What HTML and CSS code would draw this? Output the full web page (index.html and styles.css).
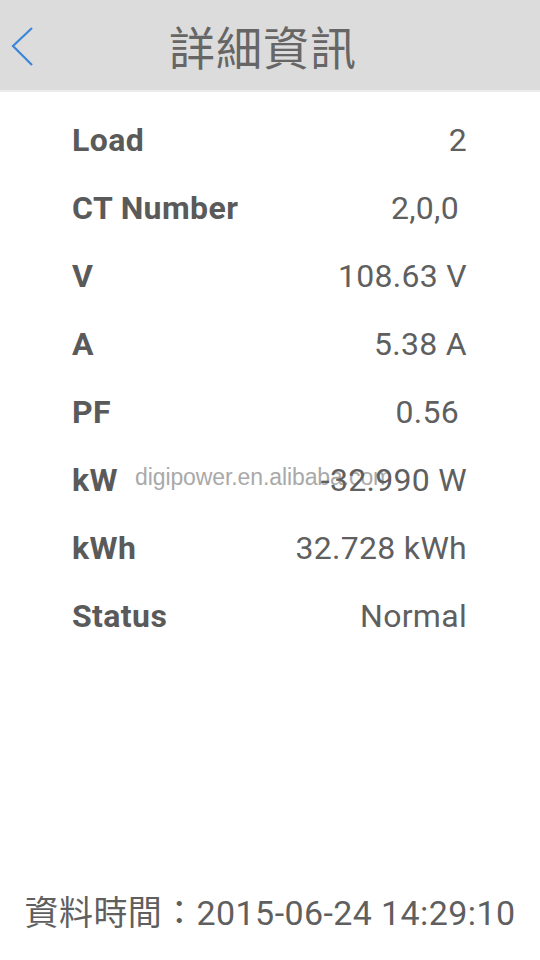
FILE: index.html
```html
<!DOCTYPE html>
<html>
<head>
    <meta charset="UTF-8">
    <title>詳細資訊</title>
    <link rel="stylesheet" href="styles.css">
</head>
<body>
    <div class="page">
        <header class="top-bar">
            <a class="back" href="#">
                <svg width="24" height="42" viewBox="0 0 24 42">
                    <polyline points="21,3 2,21 21,40" fill="none" stroke="#3b86d8" stroke-width="2.2"/>
                </svg>
            </a>
            <h1>詳細資訊</h1>
        </header>

        <!-- 資料列表 -->
        <div class="info-list">
            <div class="row"><span class="name">Load</span><span class="val">2</span></div>
            <div class="row"><span class="name">CT Number</span><span class="val pad">2,0,0</span></div>
            <div class="row"><span class="name">V</span><span class="val">108.63 V</span></div>
            <div class="row"><span class="name">A</span><span class="val">5.38 A</span></div>
            <div class="row"><span class="name">PF</span><span class="val pad">0.56</span></div>
            <div class="row mark-row">
                <span class="name">kW</span>
                <span class="watermark">digipower.en.alibaba.com</span>
                <span class="val">-32.990 W</span>
            </div>
            <div class="row"><span class="name">kWh</span><span class="val">32.728 kWh</span></div>
            <div class="row"><span class="name">Status</span><span class="val">Normal</span></div>
        </div>

        <footer class="time">資料時間：2015-06-24 14:29:10</footer>
    </div>
</body>
</html>
```

FILE: styles.css
```css
html, body {
    margin: 0;
    padding: 0;
    background: #ffffff;
}

.page {
    width: 540px;
    height: 960px;
    display: flex;
    flex-direction: column;
    font-family: Roboto, "Noto Sans CJK TC", sans-serif;
    color: #5f5f5f;
}

.top-bar {
    height: 90px;
    background: #dcdcdc;
    border-bottom: 2px solid #ececec;
    display: flex;
    align-items: center;
    justify-content: center;
    position: relative;
}

.top-bar h1 {
    margin: 0 14px 0 0;
    font-family: "Noto Sans CJK TC", sans-serif;
    font-weight: 400;
    font-size: 46px;
    color: #666666;
    letter-spacing: 1px;
}

/* 返回箭頭 */
.back {
    position: absolute;
    left: 11px;
    top: 25px;
    display: block;
    line-height: 0;
}

.info-list {
    padding: 14px 73px 0 72px;
}

.row {
    height: 68px;
    display: flex;
    align-items: center;
    justify-content: space-between;
    position: relative;
}

.name {
    font-weight: 700;
    font-size: 32px;
    letter-spacing: 0.4px;
    color: #5a5a5a;
}

.val {
    font-size: 32px;
    letter-spacing: 0.3px;
    color: #5f5f5f;
    position: relative;
}

.val.pad {
    padding-right: 8px;
}

/* 浮水印 */
.watermark {
    position: absolute;
    left: 63px;
    top: 18px;
    font-family: "Liberation Sans", Arial, sans-serif;
    font-size: 23px;
    letter-spacing: -0.1px;
    color: #a9a9a9;
}

.time {
    margin-top: auto;
    margin-bottom: 25px;
    text-align: center;
    font-size: 34px;
    letter-spacing: 0.4px;
    color: #5f5f5f;
}
```
